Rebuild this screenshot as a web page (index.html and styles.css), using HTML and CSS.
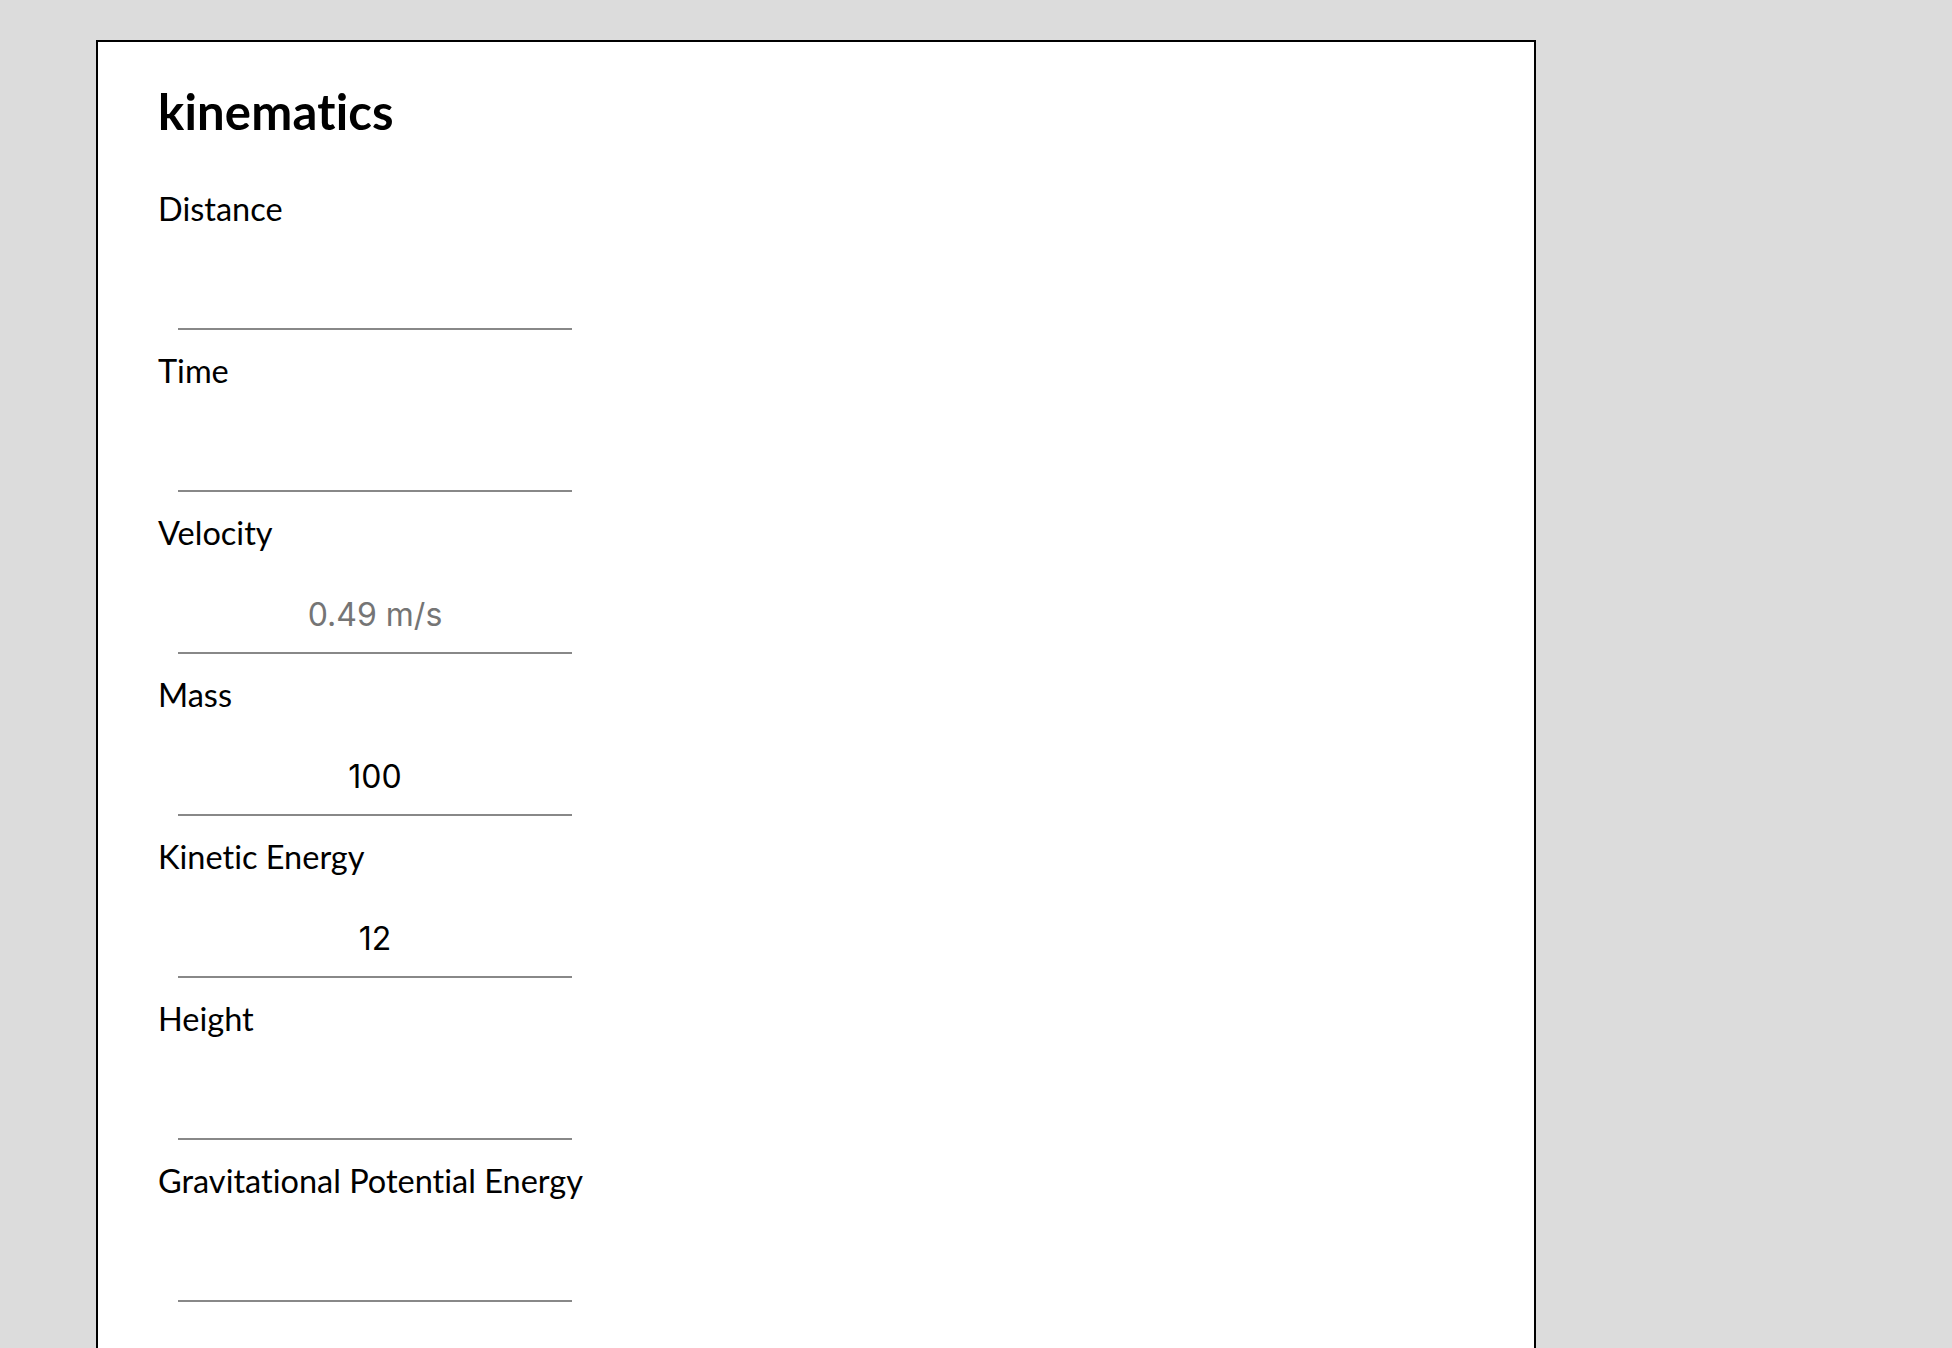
FILE: index.html
```html
<!DOCTYPE html>
<html lang="en">
<head>
<meta charset="utf-8">
<title>kinematics</title>
<link rel="stylesheet" href="styles.css">
</head>
<body>
<main class="card">
  <h1 class="title">kinematics</h1>
  <div class="field">
    <label class="label" for="distance">Distance</label>
    <input class="input" id="distance" type="text">
  </div>
  <div class="field">
    <label class="label" for="time">Time</label>
    <input class="input" id="time" type="text">
  </div>
  <div class="field">
    <label class="label" for="velocity">Velocity</label>
    <input class="input" id="velocity" type="text" placeholder="0.49 m/s">
  </div>
  <div class="field">
    <label class="label" for="mass">Mass</label>
    <input class="input" id="mass" type="text" value="100">
  </div>
  <div class="field">
    <label class="label" for="ke">Kinetic Energy</label>
    <input class="input" id="ke" type="text" value="12">
  </div>
  <div class="field">
    <label class="label" for="height">Height</label>
    <input class="input" id="height" type="text">
  </div>
  <div class="field">
    <label class="label" for="gpe">Gravitational Potential Energy</label>
    <input class="input" id="gpe" type="text">
  </div>
</main>
</body>
</html>
```
FILE: styles.css
```css
html, body {
  margin: 0;
  padding: 0;
  background: #dcdcdc;
}

.card {
  box-sizing: border-box;
  width: 1440px;
  margin: 40px 0 0 96px;
  padding: 41px 61px 80px 60px;
  background: #ffffff;
  border: 2px solid #000000;
  font-family: Lato, "Noto Sans", sans-serif;
  font-variant-ligatures: none;
  color: #000000;
}

.title {
  margin: 0 0 50px;
  font-size: 49px;
  line-height: 56px;
  font-weight: 700;
  letter-spacing: 0.2px;
}

.field {
  display: flex;
  flex-direction: column;
  align-items: flex-start;
  margin-bottom: 21px;
}

.label {
  display: block;
  font-size: 32.5px;
  line-height: 40px;
  font-weight: 400;
}

.input {
  display: block;
  box-sizing: border-box;
  width: 394px;
  height: 101px;
  margin: 0 0 0 20px;
  padding: 41px 0 18px;
  border: none;
  border-bottom: 2px solid #888888;
  outline: none;
  background: transparent;
  font-family: Inter, Roboto, sans-serif;
  font-size: 32px;
  line-height: 40px;
  text-align: center;
  color: #000000;
}

.input::placeholder {
  color: #757575;
  opacity: 1;
}
```
